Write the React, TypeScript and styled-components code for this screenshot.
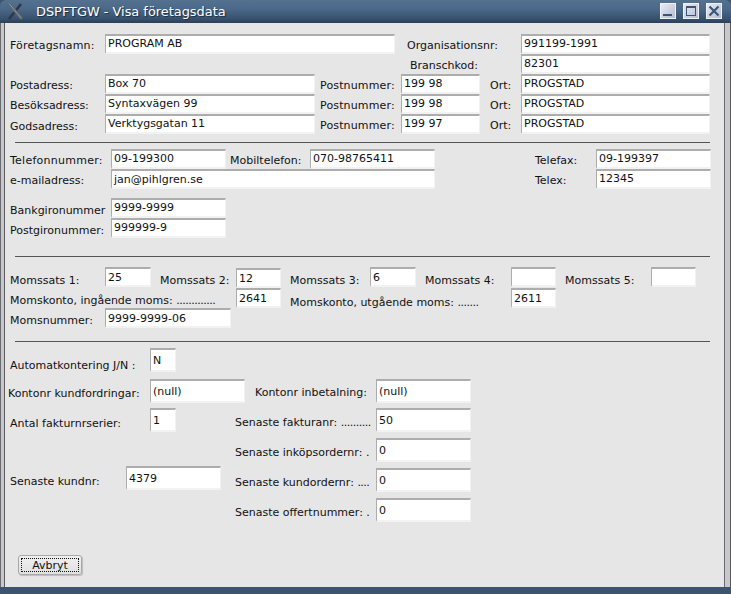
import * as React from 'react';
import styled, { createGlobalStyle } from 'styled-components';

const GlobalStyle = createGlobalStyle`
  html, body {
    margin: 0;
    padding: 0;
    background: #3c5470;
  }
`;

const Window = styled.div`
  width: 731px;
  height: 594px;
  display: flex;
  flex-direction: column;
  overflow: hidden;
  font-family: 'DejaVu Sans', sans-serif;
  font-size: 11px;
  color: #111;
  background: #3c5470;
`;

const TitleBar = styled.div`
  height: 23px;
  flex: none;
  display: flex;
  align-items: center;
  padding: 0 9px 1px 6px;
  box-sizing: border-box;
  border-radius: 6px 6px 0 0;
  background: linear-gradient(#54718f 0%, #4a6888 40%, #38526f 80%, #2c4058 100%);
`;

const Title = styled.span`
  flex: 1;
  margin-left: 12px;
  color: #fff;
  font-size: 12.9px;
  text-shadow: 1px 1px 1px #1d2c3f;
`;

const WinButton = styled.div`
  width: 16px;
  height: 16px;
  margin-left: 7px;
  display: flex;
  box-sizing: border-box;
  border: 1px solid #eef1f7;
  background: linear-gradient(135deg, #e6eaf3, #b3bdd2);
`;

const Frame = styled.div`
  flex: 1;
  display: flex;
  min-height: 0;
  padding-bottom: 7px;
  background: #3c5470;
`;

const SideEdge = styled.div<{ $width: number }>`
  width: ${p => p.$width}px;
  flex: none;
  box-sizing: border-box;
  background: #c8c8c8;
  border-left: 1px solid #6a6a72;
  border-right: 1px solid #5a5a60;
`;

const Body = styled.div`
  flex: 1;
  display: flex;
  flex-direction: column;
  min-width: 0;
  padding-top: 11px;
  background: #e6e6e6;
`;

const Row = styled.div<{ $top?: number; $height?: number; $indent?: number }>`
  display: flex;
  flex: none;
  height: ${p => p.$height ?? 20}px;
  margin-top: ${p => p.$top ?? 0}px;
  padding-left: ${p => p.$indent ?? 5}px;
`;

const Label = styled.span<{ $width: number; $lower?: number; $left?: number; $spread?: number }>`
  width: ${p => p.$width}px;
  flex: none;
  margin-left: ${p => p.$left ?? 0}px;
  padding-top: ${p => p.$lower ?? 5}px;
  letter-spacing: ${p => p.$spread ?? 0}px;
  white-space: nowrap;
  line-height: 13px;
`;

const Dots = styled.span`
  letter-spacing: -0.5px;
`;

const Field = styled.div<{ $width: number; $height?: number; $nudge?: number; $drop?: number }>`
  width: ${p => p.$width}px;
  height: ${p => p.$height ?? 20}px;
  flex: none;
  box-sizing: border-box;
  margin-top: ${p => p.$nudge ?? 0}px;
  padding: ${p => p.$drop ?? 1}px 0 0 2px;
  line-height: 13px;
  background: #fff;
  border-style: solid;
  border-width: 2px 1px 2px 1px;
  border-color: #adadad #f2f2f2 #f2f2f2 #adadad;
  white-space: nowrap;
  overflow: hidden;
  color: #111;
`;

const TallField = styled(Field).attrs({ $height: 24, $drop: 4 })``;

const Divider = styled.hr<{ $top: number }>`
  flex: none;
  width: 695px;
  height: 1px;
  margin: ${p => p.$top}px 0 0 10px;
  border: 0;
  background: #555;
`;

const Columns = styled.div`
  display: flex;
  flex: none;
  margin-top: 5px;
`;

const LeftColumn = styled.div`
  width: 230px;
  flex: none;
  display: flex;
  flex-direction: column;
`;

const RightColumn = styled.div`
  display: flex;
  flex-direction: column;
  gap: 6px;
`;

const CancelButton = styled.button`
  width: 64px;
  height: 20px;
  margin: 33px 0 0 13px;
  padding: 0;
  flex: none;
  box-sizing: border-box;
  font: inherit;
  color: #111;
  background: linear-gradient(#f0f0f0, #e0e0e0);
  border: 1px solid #a8a8a8;
  border-radius: 3px;
  box-shadow: 1px 1px 1px #bcbcbc;
  outline: 1px dotted #111;
  outline-offset: -4px;
`;

const AppIcon = () => (
  <svg width="18" height="18" viewBox="0 0 18 18">
    <path d="M15 2 L3 17" stroke="#2f3844" strokeWidth="2.6" />
    <path d="M3 2 L16 17" stroke="#5b6570" strokeWidth="3.4" />
    <path d="M3 1.5 L15 16" stroke="#9098a2" strokeWidth="1" />
  </svg>
);

const MinIcon = () => (
  <svg width="14" height="14" viewBox="0 0 14 14">
    <rect x="2" y="10" width="9" height="2" fill="#3c5478" />
  </svg>
);

const MaxIcon = () => (
  <svg width="14" height="14" viewBox="0 0 14 14">
    <rect x="2.5" y="2.5" width="9" height="9" fill="none" stroke="#3c5478" />
    <rect x="2" y="2" width="10" height="2" fill="#3c5478" />
  </svg>
);

const CloseIcon = () => (
  <svg width="14" height="14" viewBox="0 0 14 14">
    <path d="M2.5 2.5 L11.5 11.5 M11.5 2.5 L2.5 11.5" stroke="#3c5478" strokeWidth="2.2" />
  </svg>
);

const App: React.FC = () => (
  <Window>
    <GlobalStyle />
    <TitleBar>
      <AppIcon />
      <Title>DSPFTGW - Visa företagsdata</Title>
      <WinButton><MinIcon /></WinButton>
      <WinButton><MaxIcon /></WinButton>
      <WinButton><CloseIcon /></WinButton>
    </TitleBar>
    <Frame>
      <SideEdge $width={5} />
      <Body>
        <Row>
          <Label $width={95} $spread={0.15}>Företagsnamn:</Label>
          <Field $width={290}>PROGRAM AB</Field>
          <Label $width={114} $left={12}>Organisationsnr:</Label>
          <Field $width={189}>991199-1991</Field>
        </Row>
        <Row>
          <Label $width={111} $left={400}>Branschkod:</Label>
          <Field $width={189}>82301</Field>
        </Row>
        {[
          ['Postadress:', 'Box 70', '199 98'],
          ['Besöksadress:', 'Syntaxvägen 99', '199 98'],
          ['Godsadress:', 'Verktygsgatan 11', '199 97'],
        ].map(([label, street, zip]) => (
          <Row key={label}>
            <Label $width={95} $lower={label === 'Godsadress:' ? 6 : 5}>{label}</Label>
            <Field $width={210}>{street}</Field>
            <Label $width={81} $left={5} $spread={0.15}>Postnummer:</Label>
            <Field $width={79}>{zip}</Field>
            <Label $width={31} $left={10}>Ort:</Label>
            <Field $width={189}>PROGSTAD</Field>
          </Row>
        ))}
        <Divider $top={8} />
        <Row $top={6}>
          <Label $width={101} $spread={0.25}>Telefonnummer:</Label>
          <Field $width={115}>09-199300</Field>
          <Label $width={80} $left={4}>Mobiltelefon:</Label>
          <Field $width={125}>070-98765411</Field>
          <Label $width={61} $left={100}>Telefax:</Label>
          <Field $width={115}>09-199397</Field>
        </Row>
        <Row>
          <Label $width={101}>e-mailadress:</Label>
          <Field $width={324} $drop={2}>jan@pihlgren.se</Field>
          <Label $width={61} $left={100}>Telex:</Label>
          <Field $width={115}>12345</Field>
        </Row>
        <Row $top={9}>
          <Label $width={101} $lower={6}>Bankgironummer</Label>
          <Field $width={115}>9999-9999</Field>
        </Row>
        <Row>
          <Label $width={101} $lower={6}>Postgironummer:</Label>
          <Field $width={115}>999999-9</Field>
        </Row>
        <Divider $top={18} />
        <Row $top={10}>
          <Label $width={95} $lower={7}>Momssats 1:</Label>
          <Field $width={46} $drop={2}>25</Field>
          <Label $width={76} $left={9} $lower={7}>Momssats 2:</Label>
          <Field $width={45} $nudge={1} $drop={2}>12</Field>
          <Label $width={80} $left={9} $lower={7}>Momssats 3:</Label>
          <Field $width={46} $drop={2}>6</Field>
          <Label $width={86} $left={9} $lower={7}>Momssats 4:</Label>
          <Field $width={45} />
          <Label $width={86} $left={9} $lower={7}>Momssats 5:</Label>
          <Field $width={45} />
        </Row>
        <Row $top={1}>
          <Label $width={226} $lower={6}>Momskonto, ingående moms: <Dots>.............</Dots></Label>
          <Field $width={45} $drop={2}>2641</Field>
          <Label $width={221} $left={9} $lower={8}>Momskonto, utgående moms: <Dots>.......</Dots></Label>
          <Field $width={45} $drop={2}>2611</Field>
        </Row>
        <Row>
          <Label $width={95} $lower={6}>Momsnummer:</Label>
          <Field $width={126} $drop={2}>9999-9999-06</Field>
        </Row>
        <Divider $top={13} />
        <Row $top={6} $height={24}>
          <Label $width={140} $lower={11}>Automatkontering J/N :</Label>
          <TallField $width={26}>N</TallField>
        </Row>
        <Row $top={7} $height={24} $indent={3}>
          <Label $width={142} $lower={8}>Kontonr kundfordringar:</Label>
          <TallField $width={95}>(null)</TallField>
          <Label $width={121} $left={10} $lower={7}>Kontonr inbetalning:</Label>
          <TallField $width={95}>(null)</TallField>
        </Row>
        <Columns>
          <LeftColumn>
            <Row $height={25}>
              <Label $width={140} $lower={9}>Antal fakturnrserier:</Label>
              <TallField $width={26}>1</TallField>
            </Row>
            <Row $top={33} $height={24}>
              <Label $width={116} $lower={9}>Senaste kundnr:</Label>
              <TallField $width={95}>4379</TallField>
            </Row>
          </LeftColumn>
          <RightColumn>
            {[
              ['Senaste fakturanr: ', '..........', '50'],
              ['Senaste inköpsordernr: ', '.', '0'],
              ['Senaste kundordernr: ', '....', '0'],
              ['Senaste offertnummer: ', '.', '0'],
            ].map(([label, dots, value]) => (
              <Row key={label} $height={24} $indent={0}>
                <Label $width={141} $lower={8}>{label}<Dots>{dots}</Dots></Label>
                <TallField $width={95}>{value}</TallField>
              </Row>
            ))}
          </RightColumn>
        </Columns>
        <CancelButton>Avbryt</CancelButton>
      </Body>
      <SideEdge $width={7} />
    </Frame>
  </Window>
);

export default App;
